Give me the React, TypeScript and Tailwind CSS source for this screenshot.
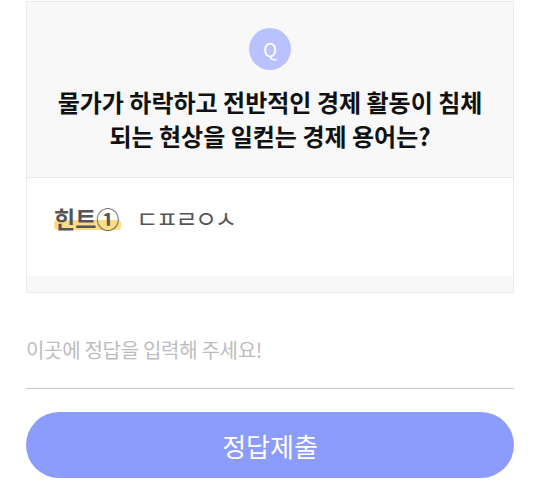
export default function App() {
  return (
    <div
      className="w-[540px] h-[485px] bg-white px-[26px] pt-px"
      style={{ fontFamily: '"Noto Sans CJK KR", "Noto Sans", sans-serif' }}
    >
      <div className="border border-[#ebebeb]">
        <div className="flex h-[176px] flex-col items-center border-b border-[#ebebeb] bg-[#f8f8f8] pt-[26px]">
          <div className="flex h-[42px] w-[42px] items-center justify-center rounded-full bg-[#b9c1ff] text-[19px] text-white">
            Q
          </div>
          <p className="mt-[15px] text-center text-[24px] font-bold leading-[34px] text-[#111]">
            물가가 하락하고 전반적인 경제 활동이 침체
            <br />
            되는 현상을 일컫는 경제 용어는?
          </p>
        </div>
        <div className="flex h-[98px] items-start gap-[17px] bg-white pl-[27px] pt-[25px]">
          <span className="relative text-[23px] font-bold leading-[30px] text-[#555]">
            <span className="absolute bottom-[3px] left-0 right-[-2px] h-[10px] rounded-[3px] bg-[#fcdc86]" />
            <span className="relative">힌트①</span>
          </span>
          <span className="text-[24px] leading-[30px] tracking-[-2.5px] text-[#555]">ㄷㅍㄹㅇㅅ</span>
        </div>
        <div className="h-[16px] bg-[#f8f8f8]" />
      </div>

      <div className="mt-[40px] border-b border-[#c8c8c8] pb-[21px]">
        <input
          className="w-full bg-transparent text-[20px] leading-[34px] tracking-[-0.3px] text-[#333] outline-none placeholder:text-[#bdbdbd]"
          placeholder="이곳에 정답을 입력해 주세요!"
        />
      </div>

      <button
        type="button"
        className="mt-[23px] flex h-[66px] w-full items-center justify-center rounded-full bg-[#8c9cfc] text-[26px] text-white"
      >
        정답제출
      </button>
    </div>
  );
}
